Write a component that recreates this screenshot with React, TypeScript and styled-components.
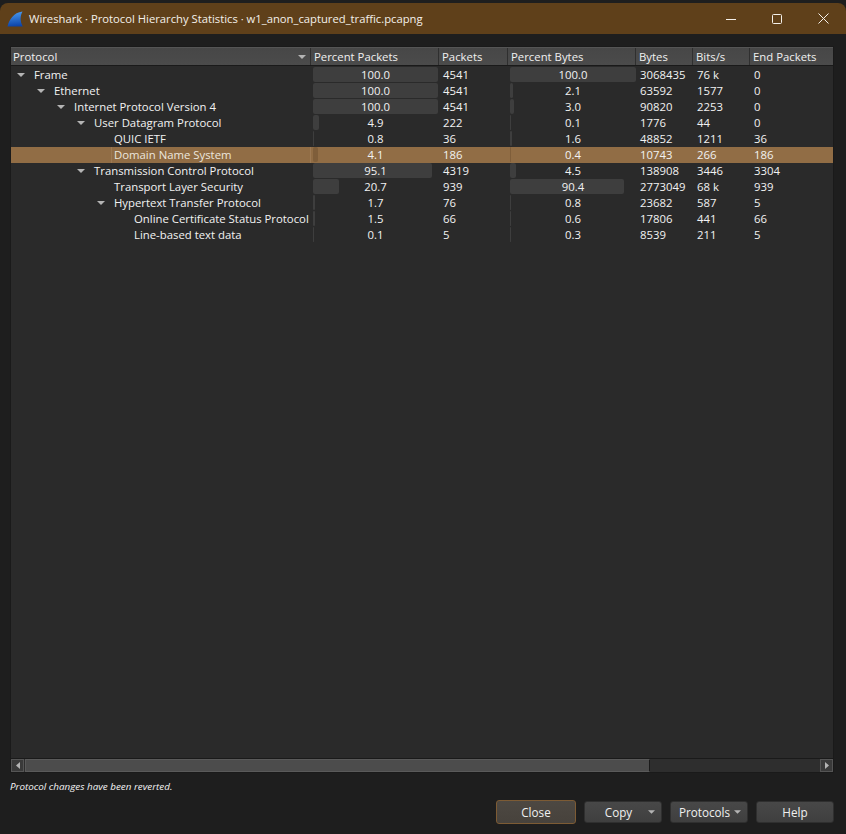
import React from "react";
import styled, { createGlobalStyle } from "styled-components";

const Global = createGlobalStyle`
  html, body { margin: 0; padding: 0; background: #1c1c1c; }
  #root { width: 846px; height: 834px; }
  * { box-sizing: border-box; }
`;

const COLUMNS = "300px 128px 69px 128px 57px 57px 83px";

const Window = styled.div`
  width: 846px; height: 834px; padding-top: 3px; display: flex; flex-direction: column;
  background: #1e1e1e; color: #f2f2f2; overflow: hidden;
  font-family: "Open Sans", "Noto Sans", sans-serif; font-size: 11.35px;
`;
const TitleBar = styled.div`
  height: 31px; flex: none; display: flex; align-items: center; padding-left: 7px;
  background: #5f401a; border-radius: 8px 8px 0 0;
`;
const TitleIcon = styled.svg`width: 16px; height: 16px; flex: none; margin-right: 6px;`;
const TitleText = styled.div`font-size: 11.25px; color: #f4f0ea; flex: 1; white-space: nowrap;`;
const WinButton = styled.div`
  width: 46px; height: 31px; display: flex; align-items: center; justify-content: center;
`;
const Content = styled.div`
  flex: 1; display: flex; flex-direction: column; padding: 12px 12px 11px 10px; min-height: 0;
`;
const Table = styled.div`
  height: 727px; flex: none; display: flex; flex-direction: column;
  background: #2a2a2a; border: 1px solid #1a1a1a;
`;
const Header = styled.div`
  display: grid; grid-template-columns: ${COLUMNS}; height: 19px; flex: none;
  background: linear-gradient(#474747, #4b4b4b); border-bottom: 1px solid #1a1a1a;
  border-top: 1px solid #555;
`;
const HeadCell = styled.div`
  display: flex; align-items: center; justify-content: space-between; padding: 0 4px 0 3px;
  border-right: 1px solid #2f2f2f; color: #f0f0f0; white-space: nowrap; overflow: hidden;
  &:first-child { padding-left: 2px; }
  &:last-child { border-right: none; }
`;
const Rows = styled.div`flex: 1; padding-top: 1px; min-height: 0;`;
const Row = styled.div<{ $selected?: boolean }>`
  display: grid; grid-template-columns: ${COLUMNS}; height: 16px; line-height: 16px;
  background: ${(p) => (p.$selected ? "#916d45" : "transparent")};
`;
const NameCell = styled.div<{ $level: number }>`
  display: flex; align-items: center; height: 16px; padding-left: ${(p) => p.$level * 20}px; white-space: nowrap;
`;
const Arrow = styled.span`
  width: 20px; flex: none; display: flex; justify-content: flex-start; padding-left: 6px;
`;
const NameText = styled.span<{ $selected?: boolean }>`
  flex: 1; height: 16px; padding-left: 3px;
  ${(p) => (p.$selected ? "border: solid #9d7a54; border-width: 0 1px; padding-left: 2px; color: #ece6de;" : "")}
`;
const TextCell = styled.div`padding-left: 4px; white-space: nowrap;`;
const BarCell = styled.div<{ $inset: number }>`
  display: grid; padding: 0 ${(p) => p.$inset}px 0 2px; height: 16px;
`;
const Bar = styled.div<{ $selected?: boolean }>`
  grid-area: 1 / 1; height: 15px; align-self: start; border-radius: 2px;
  background: ${(p) => (p.$selected ? "#7f5e3a" : "#3e3e3e")};
`;
const BarLabel = styled.div`grid-area: 1 / 1; text-align: center;`;
const ScrollBar = styled.div`
  height: 14px; flex: none; margin-top: auto; display: flex; background: #2e2e2e;
  border-top: 1px solid #1a1a1a;
`;
const ScrollButton = styled.div`
  width: 13px; display: flex; align-items: center; justify-content: center;
  background: #3a3a3a; border: 1px solid #555;
`;
const ScrollThumb = styled.div`
  width: 625px; background: #4c4c4c; border: 1px solid #5a5a5a; border-right-color: #1a1a1a; margin-left: 1px;
`;
const ScrollRest = styled.div`flex: 1;`;
const Status = styled.div`
  font-style: italic; font-size: 9.85px; margin: 7px 0 0 0; height: 13px; line-height: 13px; color: #f4f4f4;
`;
const Buttons = styled.div`
  display: flex; justify-content: flex-end; gap: 8px; margin-top: 7px; align-items: center;
`;
const Button = styled.div<{ $primary?: boolean; $width: number; $gap?: number; $shift?: number }>`
  width: ${(p) => p.$width}px; height: ${(p) => (p.$primary ? 24 : 22)}px;
  display: flex; align-items: center; justify-content: center; gap: ${(p) => p.$gap ?? 6}px;
  padding-left: ${(p) => p.$shift ?? 0}px;
  border-radius: 3px; font-size: 11.7px; color: #f0f0f0;
  background: ${(p) => (p.$primary ? "linear-gradient(#4d4842, #47423c)" : "linear-gradient(#484848, #3f3f3f)")};
  border: 1px solid ${(p) => (p.$primary ? "#7d5b34" : "#2f2f2f")};
`;
const Caret = styled.svg<{ $small?: boolean }>`
  width: ${(p) => (p.$small ? 7 : 8)}px; height: 4px; flex: none;
`;

const HEADERS = ["Protocol", "Percent Packets", "Packets", "Percent Bytes", "Bytes", "Bits/s", "End Packets"];

type Item = {
  level: number; name: string; open?: boolean; pp: number; packets: string; pb: number;
  bytes: string; bits: string; end: string; selected?: boolean;
};

const DATA: Item[] = [
  { level: 0, name: "Frame", open: true, pp: 100, packets: "4541", pb: 100, bytes: "3068435", bits: "76 k", end: "0" },
  { level: 1, name: "Ethernet", open: true, pp: 100, packets: "4541", pb: 2.1, bytes: "63592", bits: "1577", end: "0" },
  { level: 2, name: "Internet Protocol Version 4", open: true, pp: 100, packets: "4541", pb: 3.0, bytes: "90820", bits: "2253", end: "0" },
  { level: 3, name: "User Datagram Protocol", open: true, pp: 4.9, packets: "222", pb: 0.1, bytes: "1776", bits: "44", end: "0" },
  { level: 4, name: "QUIC IETF", pp: 0.8, packets: "36", pb: 1.6, bytes: "48852", bits: "1211", end: "36" },
  { level: 4, name: "Domain Name System", pp: 4.1, packets: "186", pb: 0.4, bytes: "10743", bits: "266", end: "186", selected: true },
  { level: 3, name: "Transmission Control Protocol", open: true, pp: 95.1, packets: "4319", pb: 4.5, bytes: "138908", bits: "3446", end: "3304" },
  { level: 4, name: "Transport Layer Security", pp: 20.7, packets: "939", pb: 90.4, bytes: "2773049", bits: "68 k", end: "939" },
  { level: 4, name: "Hypertext Transfer Protocol", open: true, pp: 1.7, packets: "76", pb: 0.8, bytes: "23682", bits: "587", end: "5" },
  { level: 5, name: "Online Certificate Status Protocol", pp: 1.5, packets: "66", pb: 0.6, bytes: "17806", bits: "441", end: "66" },
  { level: 5, name: "Line-based text data", pp: 0.1, packets: "5", pb: 0.3, bytes: "8539", bits: "211", end: "5" },
];

const Down = ({ small }: { small?: boolean }) => (
  <Caret $small={small} viewBox="0 0 8 4"><path d="M0 0h8L4 4z" fill="#b4b4b4" /></Caret>
);

const Percent = ({ value, selected, inset }: { value: number; selected?: boolean; inset: number }) => (
  <BarCell $inset={inset}>
    <Bar $selected={selected} style={{ width: `${value}%` }} />
    <BarLabel>{value.toFixed(1)}</BarLabel>
  </BarCell>
);

export default function App() {
  return (
    <Window>
      <Global />
      <TitleBar>
        <TitleIcon viewBox="0 0 16 16">
          <defs>
            <linearGradient id="fin" x1="0.4" y1="0" x2="0.5" y2="1">
              <stop offset="0" stopColor="#4a9bef" />
              <stop offset="1" stopColor="#0b42a8" />
            </linearGradient>
          </defs>
          <path d="M0.5 15.5C2 9 6.5 1.5 15.5 0.5C13 5 13 10.5 15.8 15.5z" fill="url(#fin)" />
        </TitleIcon>
        <TitleText>Wireshark · Protocol Hierarchy Statistics · w1_anon_captured_traffic.pcapng</TitleText>
        <WinButton>
          <svg width="10" height="10" viewBox="0 0 10 10"><path d="M0 5.5h10" stroke="#f4f0ea" strokeWidth="1" /></svg>
        </WinButton>
        <WinButton>
          <svg width="10" height="10" viewBox="0 0 10 10"><rect x="0.5" y="0.5" width="9" height="9" rx="1" fill="none" stroke="#f4f0ea" /></svg>
        </WinButton>
        <WinButton>
          <svg width="11" height="11" viewBox="0 0 11 11"><path d="M0.5 0.5l10 10M10.5 0.5l-10 10" stroke="#f4f0ea" strokeWidth="1" /></svg>
        </WinButton>
      </TitleBar>
      <Content>
        <Table>
          <Header>
            {HEADERS.map((h, i) => (
              <HeadCell key={h}>
                {h}
                {i === 0 && <Down />}
              </HeadCell>
            ))}
          </Header>
          <Rows>
            {DATA.map((d) => (
              <Row key={d.name} $selected={d.selected}>
                <NameCell $level={d.level}>
                  <Arrow>{d.open && <Down />}</Arrow>
                  <NameText $selected={d.selected}>{d.name}</NameText>
                </NameCell>
                <Percent value={d.pp} selected={d.selected} inset={1} />
                <TextCell>{d.packets}</TextCell>
                <Percent value={d.pb} selected={d.selected} inset={0} />
                <TextCell>{d.bytes}</TextCell>
                <TextCell>{d.bits}</TextCell>
                <TextCell>{d.end}</TextCell>
              </Row>
            ))}
          </Rows>
          <ScrollBar>
            <ScrollButton>
              <svg width="4" height="7" viewBox="0 0 4 7"><path d="M4 0v7L0 3.5z" fill="#b4b4b4" /></svg>
            </ScrollButton>
            <ScrollThumb />
            <ScrollRest />
            <ScrollButton>
              <svg width="4" height="7" viewBox="0 0 4 7"><path d="M0 0v7l4-3.5z" fill="#b4b4b4" /></svg>
            </ScrollButton>
          </ScrollBar>
        </Table>
        <Status>Protocol changes have been reverted.</Status>
        <Buttons>
          <Button $primary $width={80}>Close</Button>
          <Button $width={78} $gap={16} $shift={14}>Copy<Down small /></Button>
          <Button $width={78} $gap={4} $shift={2}>Protocols<Down small /></Button>
          <Button $width={78}>Help</Button>
        </Buttons>
      </Content>
    </Window>
  );
}
